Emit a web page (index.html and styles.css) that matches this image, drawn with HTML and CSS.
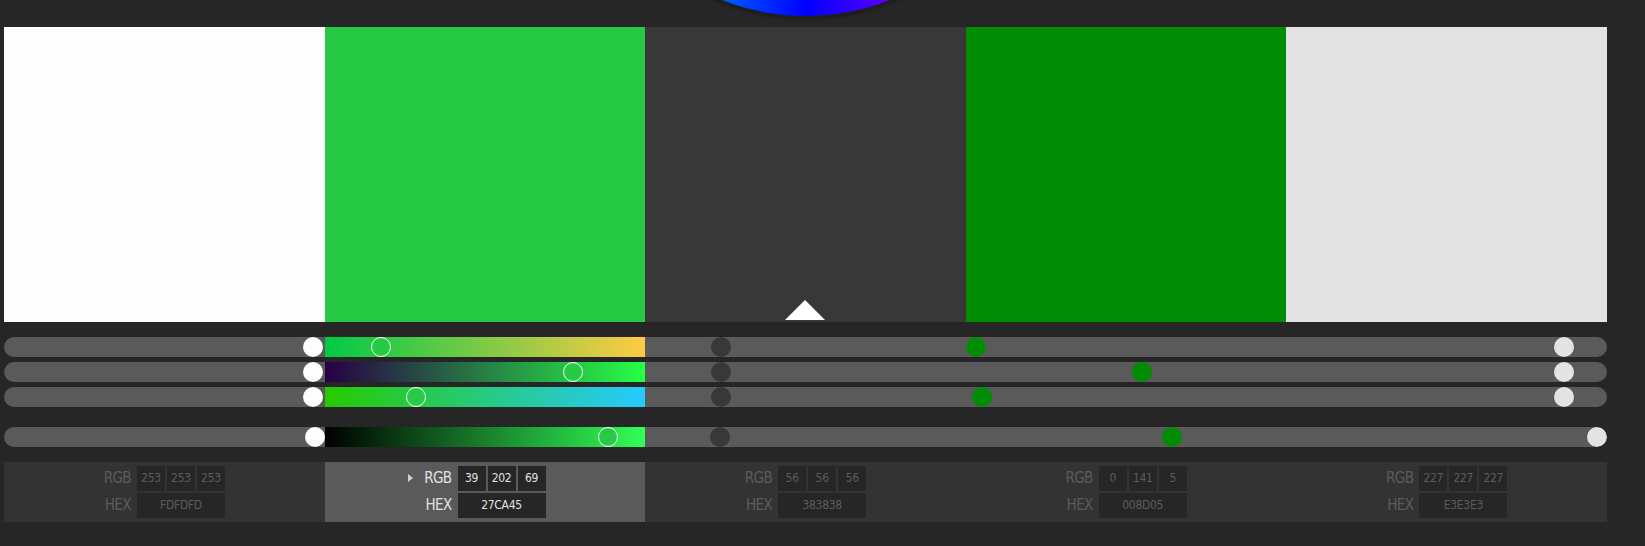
FILE: index.html
```html
<!DOCTYPE html>
<html lang="en">
<head>
<meta charset="utf-8">
<title>Palette</title>
<link rel="stylesheet" href="styles.css">
</head>
<body>
<div class="app">
  <div class="wheel"></div>

  <div class="swatches">
    <div class="swatch" style="--c:#fdfdfd"></div>
    <div class="swatch" style="--c:#27ca45"></div>
    <div class="swatch marker" style="--c:#383838"></div>
    <div class="swatch" style="--c:#008d05"></div>
    <div class="swatch" style="--c:#e3e3e3"></div>
  </div>

  <div class="sliders">
    <div class="track">
      <div class="seg"><span class="thumb" style="--c:#fdfdfd;--v:0.995"></span></div>
      <div class="seg sel grad-r"><span class="thumb" style="--c:#27ca45;--v:0.153"></span></div>
      <div class="seg"><span class="thumb" style="--c:#383838;--v:0.22"></span></div>
      <div class="seg"><span class="thumb" style="--c:#008d05;--v:0"></span></div>
      <div class="seg"><span class="thumb" style="--c:#e3e3e3;--v:0.89"></span></div>
    </div>
    <div class="track">
      <div class="seg"><span class="thumb" style="--c:#fdfdfd;--v:0.995"></span></div>
      <div class="seg sel grad-g"><span class="thumb" style="--c:#27ca45;--v:0.792"></span></div>
      <div class="seg"><span class="thumb" style="--c:#383838;--v:0.22"></span></div>
      <div class="seg"><span class="thumb" style="--c:#008d05;--v:0.553"></span></div>
      <div class="seg"><span class="thumb" style="--c:#e3e3e3;--v:0.89"></span></div>
    </div>
    <div class="track">
      <div class="seg"><span class="thumb" style="--c:#fdfdfd;--v:0.995"></span></div>
      <div class="seg sel grad-b"><span class="thumb" style="--c:#27ca45;--v:0.271"></span></div>
      <div class="seg"><span class="thumb" style="--c:#383838;--v:0.22"></span></div>
      <div class="seg"><span class="thumb" style="--c:#008d05;--v:0.02"></span></div>
      <div class="seg"><span class="thumb" style="--c:#e3e3e3;--v:0.89"></span></div>
    </div>
    <div class="track alpha">
      <div class="seg"><span class="thumb" style="--c:#fdfdfd;--v:1"></span></div>
      <div class="seg sel grad-v"><span class="thumb" style="--c:#27ca45;--v:0.91"></span></div>
      <div class="seg"><span class="thumb" style="--c:#383838;--v:0.216"></span></div>
      <div class="seg"><span class="thumb" style="--c:#008d05;--v:0.654"></span></div>
      <div class="seg"><span class="thumb" style="--c:#e3e3e3;--v:1"></span></div>
    </div>
  </div>

  <div class="info">
    <div class="cell">
      <div class="label">RGB</div>
      <div class="rgb"><span class="box">253</span><span class="box">253</span><span class="box">253</span></div>
      <div class="label">HEX</div>
      <div class="box">FDFDFD</div>
    </div>
    <div class="cell sel">
      <div class="label arrow">RGB</div>
      <div class="rgb"><span class="box">39</span><span class="box">202</span><span class="box">69</span></div>
      <div class="label">HEX</div>
      <div class="box">27CA45</div>
    </div>
    <div class="cell">
      <div class="label">RGB</div>
      <div class="rgb"><span class="box">56</span><span class="box">56</span><span class="box">56</span></div>
      <div class="label">HEX</div>
      <div class="box">383838</div>
    </div>
    <div class="cell">
      <div class="label">RGB</div>
      <div class="rgb"><span class="box">0</span><span class="box">141</span><span class="box">5</span></div>
      <div class="label">HEX</div>
      <div class="box">008D05</div>
    </div>
    <div class="cell">
      <div class="label">RGB</div>
      <div class="rgb"><span class="box">227</span><span class="box">227</span><span class="box">227</span></div>
      <div class="label">HEX</div>
      <div class="box">E3E3E3</div>
    </div>
  </div>
</div>
</body>
</html>
```

FILE: styles.css
```css
* { box-sizing: border-box; }

html, body {
  margin: 0;
  padding: 0;
  background: #262626;
  width: 1645px;
  height: 546px;
  overflow: hidden;
}

.app {
  position: relative;
  width: 1645px;
  height: 546px;
  padding: 27px 38px 0 4px;
  font-family: "Liberation Sans Narrow", "DejaVu Sans Condensed", "Liberation Sans", sans-serif;
}

.wheel {
  position: absolute;
  left: 578px;
  top: -440px;
  width: 456px;
  height: 456px;
  border-radius: 50%;
  background: conic-gradient(#ffff00, #ff0000, #ff00ff, #0000ff, #00ffff, #00ff00, #ffff00);
  box-shadow: 0 0 0 2px #1e1e1e, 0 0 2px 4px #1f1f1f;
}

.swatches {
  display: grid;
  grid-template-columns: repeat(5, 1fr);
  height: 295px;
}

.swatch {
  background: var(--c);
}

.marker {
  position: relative;
}

.marker::after {
  content: "";
  position: absolute;
  left: 50%;
  bottom: 2px;
  margin-left: -20px;
  border-left: 20px solid transparent;
  border-right: 20px solid transparent;
  border-bottom: 20px solid #ffffff;
}

.sliders {
  margin-top: 15px;
  display: flex;
  flex-direction: column;
  gap: 5px;
}

.track {
  height: 20px;
  border-radius: 10px;
  background: #5a5a5a;
  display: grid;
  grid-template-columns: repeat(5, 1fr);
  overflow: hidden;
}

.track.alpha {
  margin-top: 15px;
}

.seg {
  position: relative;
}

.thumb {
  position: absolute;
  top: 0;
  left: calc(10px + var(--v) * (100% - 20px));
  margin-left: -10px;
  width: 20px;
  height: 20px;
  border-radius: 50%;
  background: var(--c);
}

.seg.sel .thumb {
  border: 1px solid #ffffff;
}

.grad-r { background: linear-gradient(to right, rgb(0,202,69), rgb(255,202,69)); }
.grad-g { background: linear-gradient(to right, rgb(39,0,69), rgb(39,255,69)); }
.grad-b { background: linear-gradient(to right, rgb(39,202,0), rgb(39,202,255)); }
.grad-v { background: linear-gradient(to right, #000000, rgb(49,255,87)); }

.info {
  margin-top: 15px;
  display: grid;
  grid-template-columns: repeat(5, 1fr);
  height: 60px;
}

.cell {
  background: #333333;
  display: grid;
  grid-template-columns: auto 88px;
  grid-template-rows: 25px 25px;
  column-gap: 6px;
  row-gap: 2px;
  justify-content: center;
  align-content: center;
  color: #5c5c5c;
}

.cell.sel {
  background: #5a5a5a;
  color: #e2e2e2;
}

.label {
  position: relative;
  font-size: 15px;
  letter-spacing: -0.6px;
  line-height: 25px;
  text-align: right;
}

.label.arrow::before {
  content: "";
  position: absolute;
  left: -16px;
  top: 8px;
  border-top: 4.5px solid transparent;
  border-bottom: 4.5px solid transparent;
  border-left: 5px solid #d0d0d0;
}

.rgb {
  display: grid;
  grid-template-columns: repeat(3, 28px);
  column-gap: 2px;
}

.box {
  display: block;
  background: #262626;
  height: 25px;
  line-height: 25px;
  text-align: center;
  font-size: 12px;
  letter-spacing: -0.3px;
}
```
